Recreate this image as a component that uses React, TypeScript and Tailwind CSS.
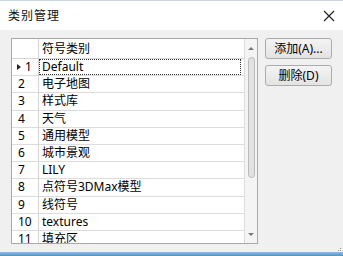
const rows = [
  "Default",
  "电子地图",
  "样式库",
  "天气",
  "通用模型",
  "城市景观",
  "LILY",
  "点符号3DMax模型",
  "线符号",
  "textures",
  "填充区",
];

function CloseIcon() {
  return (
    <svg width="12" height="12" viewBox="0 0 12 12" className="text-[#222]">
      <path d="M1 1 L11 11 M11 1 L1 11" stroke="currentColor" strokeWidth="1.2" fill="none" />
    </svg>
  );
}

function Scrollbar() {
  return (
    <div className="w-[13px] shrink-0 border-l border-[#dcdcdc] bg-[#f4f4f4] flex flex-col items-center">
      <div className="h-[16px] flex items-center justify-center pt-[2px]">
        <div className="w-0 h-0 border-l-[3px] border-r-[3px] border-b-[3px] border-l-transparent border-r-transparent border-b-[#777]" />
      </div>
      <div className="mt-[2px] w-[7px] h-[121px] rounded-[4px] border border-[#b9b9b9] bg-[#e2e2e2]" />
      <div className="flex-1" />
      <div className="h-[16px] flex items-center justify-center pb-[2px]">
        <div className="w-0 h-0 border-l-[3px] border-r-[3px] border-t-[3px] border-l-transparent border-r-transparent border-t-[#777]" />
      </div>
    </div>
  );
}

function Grid() {
  return (
    <div className="w-[247px] h-[206px] border border-[#a8a8a8] bg-white flex overflow-hidden shrink-0">
      <div className="flex-1 flex flex-col overflow-hidden">
        <div className="h-[20px] flex shrink-0 border-b border-[#d4d4d4]">
          <div className="w-[27px] shrink-0 border-r border-[#d4d4d4]" />
          <div className="flex-1 pl-[3px] flex items-center">符号类别</div>
        </div>
        {rows.map((name, i) => (
          <div key={i} className="h-[17.2px] flex shrink-0 border-b border-[#dcdcdc]">
            <div className="w-[27px] shrink-0 border-r border-[#d4d4d4] flex items-center pl-[5px]">
              {i === 0 ? (
                <>
                  <div className="w-0 h-0 border-t-[3px] border-b-[3px] border-l-[4px] border-t-transparent border-b-transparent border-l-[#222] mr-[4px]" />
                  <span>1</span>
                </>
              ) : (
                <span className="pl-[1px]">{i + 1}</span>
              )}
            </div>
            <div
              className={
                i === 0
                  ? "flex-1 flex items-center pl-[2px] mr-[3px] border border-dotted border-[#333]"
                  : "flex-1 flex items-center pl-[3px]"
              }
            >
              {name}
            </div>
          </div>
        ))}
      </div>
      <Scrollbar />
    </div>
  );
}

function Btn({ label }: { label: string }) {
  return (
    <button className="w-[67px] h-[21px] rounded-[3px] border border-[#acacac] bg-gradient-to-b from-[#f4f4f4] to-[#e3e3e3] text-[12px] text-black flex items-center justify-center">
      {label}
    </button>
  );
}

export default function App() {
  return (
    <div className="w-[343px] h-[256px] bg-[#f0f0f0] flex flex-col overflow-hidden relative font-['Noto_Sans','Noto_Sans_CJK_SC',sans-serif] text-[12px] text-black">
      <div className="h-[30px] bg-white flex items-center justify-between pl-[8px] pr-[8px] shrink-0 border-t border-[#c9d6e3]">
        <span className="text-[12px] tracking-[1px] text-[#111]">类别管理</span>
        <CloseIcon />
      </div>
      <div className="flex pl-[11px] pt-[8px] gap-[7px] flex-1">
        <Grid />
        <div className="flex flex-col gap-[6px]">
          <Btn label="添加(A)..." />
          <Btn label="删除(D)" />
        </div>
      </div>
      <div className="absolute right-[2px] bottom-[5px] grid grid-cols-3 gap-[1px]">
        <div />
        <div />
        <div className="w-[1px] h-[1px] bg-[#999]" />
        <div />
        <div className="w-[1px] h-[1px] bg-[#999]" />
        <div className="w-[1px] h-[1px] bg-[#999]" />
      </div>
      <div className="h-[4px] bg-gradient-to-b from-[#8fbde6] to-[#4f8fcf] shrink-0" />
    </div>
  );
}
